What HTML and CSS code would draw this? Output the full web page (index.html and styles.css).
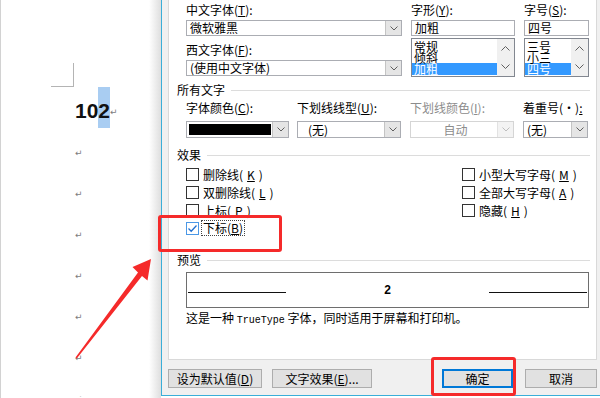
FILE: index.html
```html
<!DOCTYPE html>
<html lang="zh-CN">
<head>
  <meta charset="UTF-8">
  <meta name="viewport" content="width=device-width, initial-scale=1.0">
  <title>字体</title>
  <link rel="stylesheet" href="styles.css">
</head>
<body>
  <div class="doc">
    <div class="corner"></div>
    <p class="para"><span class="num">10<span class="hl">2</span></span><span class="mark">↵</span></p>
    <p class="para"><span class="mark">↵</span></p>
    <p class="para"><span class="mark">↵</span></p>
    <p class="para"><span class="mark">↵</span></p>
    <p class="para"><span class="mark">↵</span></p>
    <p class="para"><span class="mark">↵</span></p>
    <p class="para"><span class="mark">↵</span></p>
    <p class="para last"><span class="mark">↵</span></p>
  </div>

  <div class="dialog">
    <div class="panel">
      <div class="font-row">
        <div class="col">
          <div class="lbl">中文字体(<u>T</u>):</div>
          <div class="combo"><span class="field">微软雅黑</span><span class="drop"><svg width="8" height="5" viewBox="0 0 8 5"><path d="M0.5 0.5L4 4L7.5 0.5"/></svg></span></div>
          <div class="lbl second">西文字体(<u>F</u>):</div>
          <div class="combo"><span class="field">(使用中文字体)</span><span class="drop"><svg width="8" height="5" viewBox="0 0 8 5"><path d="M0.5 0.5L4 4L7.5 0.5"/></svg></span></div>
        </div>
        <div class="col">
          <div class="lbl">字形(<u>Y</u>):</div>
          <div class="textbox">加粗</div>
          <div class="listbox">
            <ul>
              <li>常规</li>
              <li>倾斜</li>
              <li class="on">加粗</li>
            </ul>
            <div class="scroll">
              <svg width="9" height="5" viewBox="0 0 9 5"><path d="M0.5 4.5L4.5 0.5L8.5 4.5"/></svg>
              <svg width="9" height="5" viewBox="0 0 9 5"><path d="M0.5 0.5L4.5 4.5L8.5 0.5"/></svg>
            </div>
          </div>
        </div>
        <div class="col">
          <div class="lbl">字号(<u>S</u>):</div>
          <div class="textbox">四号</div>
          <div class="listbox">
            <ul>
              <li>三号</li>
              <li>小三</li>
              <li class="on">四号</li>
            </ul>
            <div class="scroll">
              <svg width="9" height="5" viewBox="0 0 9 5"><path d="M0.5 4.5L4.5 0.5L8.5 4.5"/></svg>
              <svg width="9" height="5" viewBox="0 0 9 5"><path d="M0.5 0.5L4.5 4.5L8.5 0.5"/></svg>
            </div>
          </div>
        </div>
      </div>

      <div class="group">所有文字</div>
      <div class="text-row">
        <div class="col">
          <div class="lbl">字体颜色(<u>C</u>):</div>
          <div class="combo tall"><span class="field"><span class="swatch"></span></span><span class="drop"><svg width="8" height="5" viewBox="0 0 8 5"><path d="M0.5 0.5L4 4L7.5 0.5"/></svg></span></div>
        </div>
        <div class="col">
          <div class="lbl">下划线线型(<u>U</u>):</div>
          <div class="combo tall"><span class="field pad">(无)</span><span class="drop"><svg width="8" height="5" viewBox="0 0 8 5"><path d="M0.5 0.5L4 4L7.5 0.5"/></svg></span></div>
        </div>
        <div class="col off">
          <div class="lbl">下划线颜色(<u>I</u>):</div>
          <div class="combo tall"><span class="field center">自动</span><span class="drop"><svg width="8" height="5" viewBox="0 0 8 5"><path d="M0.5 0.5L4 4L7.5 0.5"/></svg></span></div>
        </div>
        <div class="col">
          <div class="lbl">着重号(·)<u>:</u></div>
          <div class="combo tall"><span class="field">(无)</span><span class="drop"><svg width="8" height="5" viewBox="0 0 8 5"><path d="M0.5 0.5L4 4L7.5 0.5"/></svg></span></div>
        </div>
      </div>

      <div class="group">效果</div>
      <div class="effects">
        <div class="check"><span class="box"></span>删除线(<u>K</u>)</div>
        <div class="check"><span class="box"></span>小型大写字母(<u>M</u>)</div>
        <div class="check"><span class="box"></span>双删除线(<u>L</u>)</div>
        <div class="check"><span class="box"></span>全部大写字母(<u>A</u>)</div>
        <div class="check"><span class="box"></span>上标(<u>P</u>)</div>
        <div class="check"><span class="box"></span>隐藏(<u>H</u>)</div>
        <div class="check"><span class="box checked"><svg width="11" height="11" viewBox="0 0 11 11"><path d="M1.5 5.5L4.2 8.2L9.5 2.5"/></svg></span><span class="focus">下标(<u>B</u>)</span></div>
      </div>

      <div class="group">预览</div>
      <div class="preview">
        <span class="rule"></span>
        <span class="sample">2</span>
        <span class="rule"></span>
      </div>
      <p class="note">这是一种 <span class="mono">TrueType</span> 字体，同时适用于屏幕和打印机。</p>
    </div>

    <div class="buttons">
      <button class="btn">设为默认值(<u>D</u>)</button>
      <button class="btn wide">文字效果(<u>E</u>)...</button>
      <button class="btn ok">确定</button>
      <button class="btn cancel">取消</button>
    </div>
  </div>

  <div class="callout callout-sub"></div>
  <div class="callout callout-ok"></div>
  <svg class="arrow" width="600" height="398" viewBox="0 0 600 398">
    <polygon points="151,259 132.5,267 138,272.5 75.5,357.5 76.8,358.6 142,276 147.5,280.5"/>
  </svg>
</body>
</html>
```

FILE: styles.css
```css
* {
  box-sizing: border-box;
}
body {
  margin: 0;
  width: 600px;
  height: 398px;
  overflow: hidden;
  position: relative;
  display: flex;
  align-items: flex-start;
  background: #fff;
  font-family: "Noto Sans CJK SC", "Liberation Sans", sans-serif;
  font-size: 12px;
  color: #000;
}
u {
  text-decoration: underline;
  text-underline-offset: 1px;
}

/* word page on the left */
.doc {
  flex: none;
  width: 161px;
  height: 398px;
  overflow: hidden;
  background: linear-gradient(to right, #fff 0, #fff 149px, #dedede 161px);
  box-shadow: inset 1px 0 #d2d2d2;
}
.corner {
  margin: 63px 0 0 51px;
  width: 23px;
  height: 24px;
  border-right: 1px solid #b4b4b4;
  border-bottom: 1px solid #b4b4b4;
}
.para {
  margin: 0;
  height: 41px;
  padding-left: 75px;
  font-family: "Liberation Sans", sans-serif;
  font-size: 21px;
  line-height: 41px;
  white-space: nowrap;
}
.para.last {
  height: 23px;
  overflow: hidden;
}
.num {
  font-weight: bold;
  color: #111;
  vertical-align: -3px;
}
.hl {
  display: inline-block;
  height: 41px;
  vertical-align: top;
  margin-top: -3px;
  padding-top: 3px;
  background: #a9cdf2;
}
.mark {
  font-family: "DejaVu Sans", sans-serif;
  font-size: 9px;
  color: #7c7c7c;
}

/* font dialog */
.dialog {
  flex: none;
  width: 439px;
  height: 396px;
  background: #f0f0f0;
  border-left: 1px solid #3aaed8;
  border-bottom: 1px solid #3aaed8;
}
.panel {
  margin-left: 6px;
  width: 429px;
  height: 360px;
  background: #fff;
  border: 1px solid #d9d9d9;
  border-top: none;
}
.lbl {
  height: 14px;
  line-height: 14px;
  white-space: nowrap;
}
.col {
  display: flex;
  flex-direction: column;
}
.font-row {
  display: grid;
  grid-template-columns: 216px 104px 65px;
  column-gap: 9px;
  padding: 3px 0 0 17px;
}
.font-row .combo,
.font-row .textbox {
  margin-top: 3px;
}
.font-row .second {
  margin-top: 7px;
}
.combo {
  display: flex;
  height: 16px;
  border: 1px solid #abadb3;
  background: #fff;
}
.combo.tall {
  height: 17px;
  margin-top: 6px;
}
.field {
  flex: 1;
  padding-left: 3px;
  line-height: 14px;
  white-space: nowrap;
}
.tall .field {
  line-height: 15px;
}
.field.pad {
  padding-left: 10px;
}
.field.center {
  text-align: center;
}
.drop {
  flex: none;
  width: 16px;
  display: flex;
  align-items: center;
  justify-content: center;
  background: #e5e5e5;
  border-left: 1px solid #c4c4c4;
}
.drop svg path,
.scroll svg path {
  fill: none;
  stroke: #5f5f5f;
  stroke-width: 1;
}
.swatch {
  display: block;
  margin: 2px 1px 0 -1px;
  height: 11px;
  background: #000;
}
.textbox {
  height: 16px;
  border: 1px solid #abadb3;
  padding-left: 3px;
  line-height: 14px;
}
.listbox {
  display: flex;
  height: 39px;
  margin-top: 2px;
  border: 1px solid #828790;
  background: #fff;
}
.listbox ul {
  flex: 1;
  margin: 0;
  padding: 2px 0 0;
  list-style: none;
}
.listbox li {
  height: 11px;
  line-height: 11px;
  padding-left: 2px;
  white-space: nowrap;
}
.listbox li.on {
  height: 12px;
  background: #3399ff;
  color: #fff;
}
.scroll {
  flex: none;
  width: 17px;
  display: flex;
  flex-direction: column;
  align-items: center;
  justify-content: space-between;
  padding: 7px 0 7px;
  background: #f0f0f0;
}

.group {
  display: flex;
  align-items: center;
  height: 14px;
  line-height: 14px;
  padding: 0 6px 0 8px;
  margin-top: 6px;
  white-space: nowrap;
}
.group::after {
  content: "";
  flex: 1;
  height: 1px;
  margin: 1px 0 0 6px;
  background: #dcdcdc;
}
.text-row {
  display: grid;
  grid-template-columns: 102px 104px 104px 65px;
  column-gap: 9px;
  margin-top: 4px;
  padding-left: 17px;
}
.text-row .col:first-child {
  margin-right: -1px;
}
.off .lbl,
.off .field {
  color: #8c8c8c;
}
.off .combo {
  border-color: #d5d5d5;
}
.off .drop {
  background: #f3f3f3;
  border-left-color: #e2e2e2;
}
.off .drop svg path {
  stroke: #bdbdbd;
}
.text-row + .group {
  margin-top: 10px;
}

.effects {
  display: grid;
  grid-template-columns: 276px 1fr;
  grid-auto-rows: 18px;
  margin-top: 3px;
  padding-left: 17px;
}
.check {
  display: flex;
  align-items: center;
  gap: 4px;
  white-space: nowrap;
}
.box {
  flex: none;
  width: 13px;
  height: 13px;
  border: 1px solid #333;
  background: #fff;
  display: flex;
  align-items: center;
  justify-content: center;
}
.box.checked {
  border-color: #4b98e6;
}
.box.checked path {
  fill: none;
  stroke: #1f6fd0;
  stroke-width: 1.3;
}
.focus {
  outline: 1px dotted #444;
  outline-offset: 0;
  padding: 0 1px;
  margin-left: -1px;
  line-height: 14px;
}
.effects + .group {
  margin-top: 16px;
}
.preview {
  display: flex;
  align-items: center;
  height: 36px;
  margin: 5px 7px 0 17px;
  border: 1px solid #6e6e6e;
  padding: 4px 1px 0;
}
.rule {
  width: 98px;
  height: 1px;
  background: #111;
}
.sample {
  flex: 1;
  text-align: center;
  font-family: "Liberation Sans", sans-serif;
  font-weight: bold;
  font-size: 12px;
  line-height: 12px;
  margin-top: -5px;
}
.note {
  margin: 3px 0 0 17px;
  height: 14px;
  line-height: 14px;
  white-space: nowrap;
}
.mono {
  font-family: "Liberation Mono", monospace;
  font-size: 10px;
}

.buttons {
  display: flex;
  margin: 9px 3px 0 6px;
}
.btn {
  height: 19px;
  width: 94px;
  margin-right: 10px;
  padding: 0;
  border: 1px solid #adadad;
  background: #e1e1e1;
  font-family: inherit;
  font-size: 12px;
  line-height: 17px;
  color: #000;
}
.btn.wide {
  width: 100px;
}
.btn.ok {
  width: 71px;
  margin-left: auto;
  margin-right: 12px;
  border: 2px solid #0078d7;
  line-height: 15px;
}
.btn.cancel {
  width: 72px;
  margin-right: 0;
}

/* red annotations over the screenshot */
.callout {
  position: absolute;
  border: 3px solid #f52a2a;
  border-radius: 3px;
}
.callout-sub {
  left: 158px;
  top: 215px;
  width: 124px;
  height: 37px;
}
.callout-ok {
  left: 431px;
  top: 357px;
  width: 85px;
  height: 39px;
}
.arrow {
  position: absolute;
  left: 0;
  top: 0;
  pointer-events: none;
}
.arrow polygon {
  fill: #f52a2a;
}
```
